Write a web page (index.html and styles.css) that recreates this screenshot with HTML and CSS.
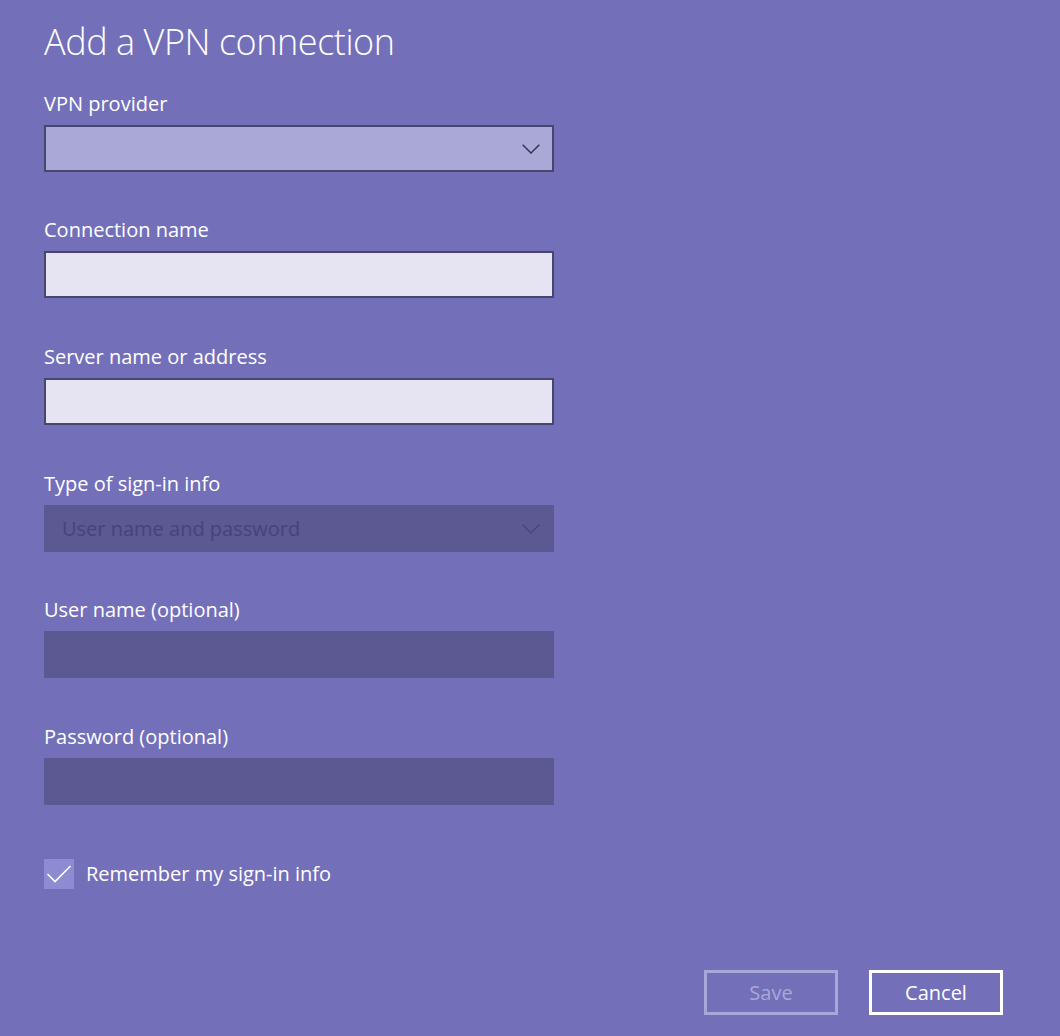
FILE: index.html
```html
<!DOCTYPE html>
<html lang="en">
<head>
<meta charset="utf-8">
<title>Add a VPN connection</title>
<link rel="stylesheet" href="styles.css">
</head>
<body>
<main class="page">
  <h1 class="title">Add a VPN connection</h1>

  <div class="field tight">
    <div class="label">VPN provider</div>
    <div class="select select-provider">
      <span class="select-text"></span>
      <svg class="chev" viewBox="0 0 18 10" width="18" height="10"><path d="M0.7 0.7 L9 9 L17.3 0.7" fill="none" stroke="#2e2b4f" stroke-width="1.3"/></svg>
    </div>
  </div>

  <div class="field">
    <div class="label">Connection name</div>
    <div class="input"></div>
  </div>

  <div class="field">
    <div class="label">Server name or address</div>
    <div class="input"></div>
  </div>

  <div class="field tight">
    <div class="label">Type of sign-in info</div>
    <div class="select disabled">
      <span class="select-text">User name and password</span>
      <svg class="chev" viewBox="0 0 18 10" width="18" height="10"><path d="M0.7 0.7 L9 9 L17.3 0.7" fill="none" stroke="#47447c" stroke-width="1.3"/></svg>
    </div>
  </div>

  <div class="field">
    <div class="label">User name (optional)</div>
    <div class="input disabled"></div>
  </div>

  <div class="field">
    <div class="label">Password (optional)</div>
    <div class="input disabled"></div>
  </div>

  <label class="check-row">
    <span class="checkbox">
      <svg viewBox="0 0 30 30" width="30" height="30"><path d="M3.5 15 L11 22.5 L26.5 7" fill="none" stroke="#ffffff" stroke-width="1.6"/></svg>
    </span>
    <span class="check-label">Remember my sign-in info</span>
  </label>

  <div class="actions">
    <button class="btn btn-save" disabled>Save</button>
    <button class="btn btn-cancel">Cancel</button>
  </div>
</main>
</body>
</html>
```

FILE: styles.css
```css
html, body {
  margin: 0;
  padding: 0;
  background: #7370b9;
}

body {
  font-family: "Open Sans", "Noto Sans", "Liberation Sans", sans-serif;
  color: #ffffff;
}

.page {
  width: 1060px;
  height: 1036px;
  box-sizing: border-box;
  padding: 18px 0 0 44px;
  display: flex;
  flex-direction: column;
}

.title {
  margin: 0 0 24px 0;
  font-size: 36px;
  font-weight: 300;
  line-height: 48px;
  letter-spacing: -0.45px;
}

.field {
  display: flex;
  flex-direction: column;
  margin-bottom: 45px;
}

.field.tight {
  margin-bottom: 44px;
}

.label {
  font-size: 20px;
  line-height: 28px;
  height: 28px;
  margin-bottom: 7px;
}

.input,
.select {
  width: 510px;
  height: 47px;
  box-sizing: border-box;
}

.input {
  background: #e6e4f2;
  border: 2.5px solid #48456f;
}

.select {
  display: flex;
  align-items: center;
  justify-content: space-between;
  padding: 0 14px 0 18px;
}

.select-provider {
  background: #aaa8d6;
  border: 2.5px solid #48456f;
  padding-left: 16px;
  padding-right: 12px;
}

.select.disabled,
.input.disabled {
  background: #5b5892;
  border: none;
}

.select-text {
  font-size: 20px;
  color: #46437a;
}

.chev {
  display: block;
}

.check-row {
  display: flex;
  align-items: center;
  gap: 12px;
  margin-top: 9px;
  height: 30px;
}

.checkbox {
  width: 30px;
  height: 30px;
  background: #8e8bd2;
  display: block;
}

.checkbox svg {
  display: block;
}

.check-label {
  font-size: 20px;
  line-height: 30px;
}

.actions {
  display: flex;
  justify-content: flex-end;
  gap: 31px;
  padding-right: 57px;
  margin-top: 81px;
}

.btn {
  width: 134px;
  height: 45px;
  box-sizing: border-box;
  background: transparent;
  font-family: "Open Sans", "Noto Sans", "Liberation Sans", sans-serif;
  font-size: 20px;
  padding: 0;
  margin: 0;
}

.btn-save {
  border: 3px solid #a9a7d8;
  color: #a9a7d8;
}

.btn-cancel {
  border: 3px solid #ffffff;
  color: #ffffff;
}
```
